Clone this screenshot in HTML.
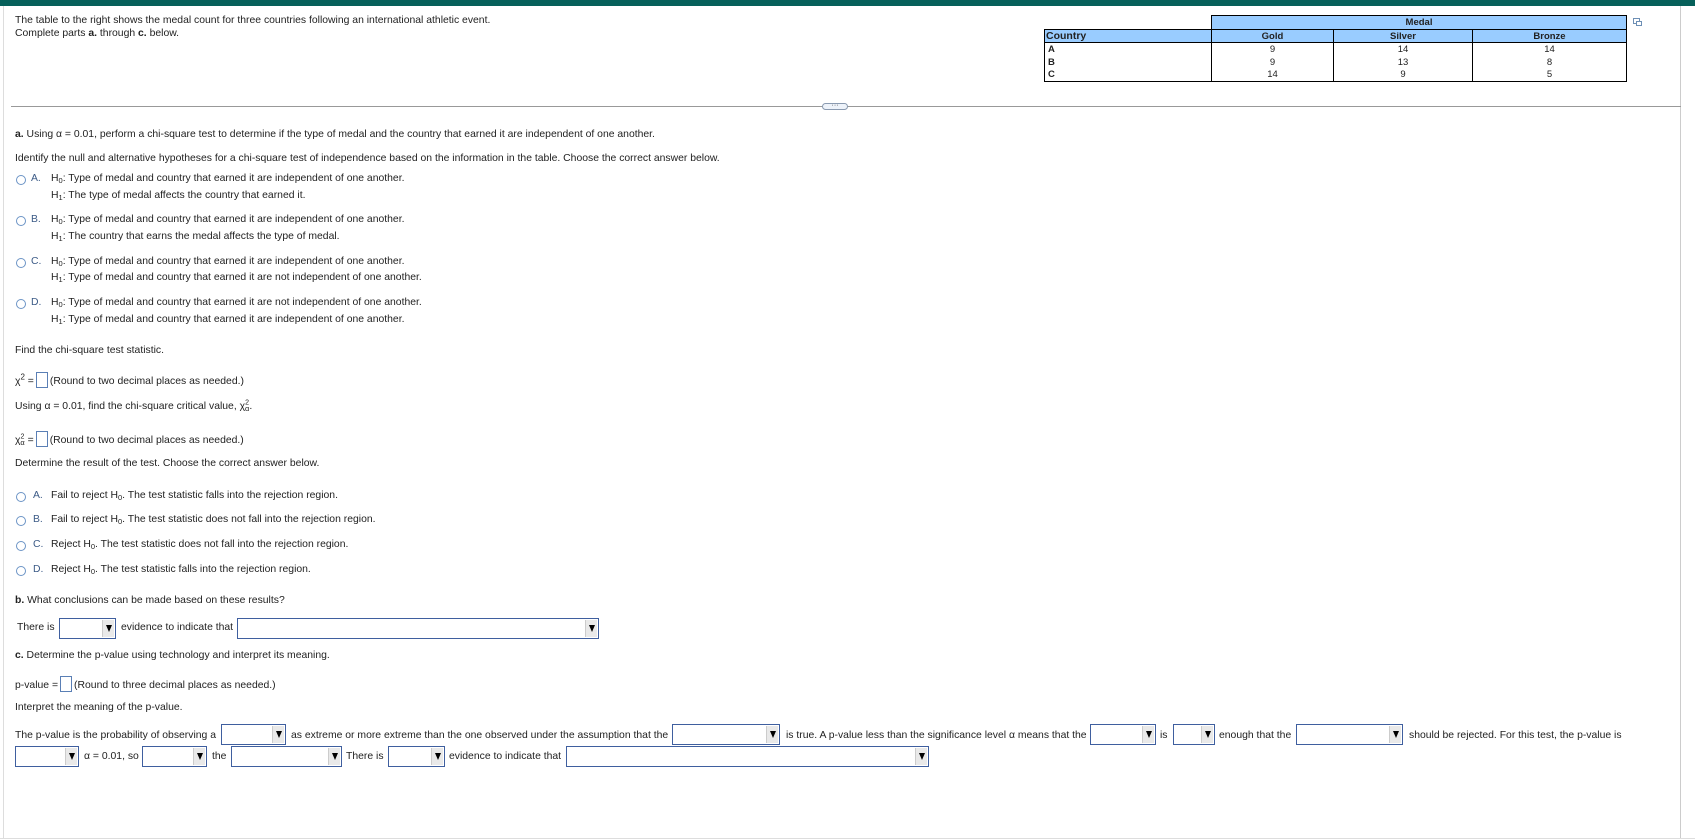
<!DOCTYPE html>
<html><head><meta charset="utf-8">
<style>
*{margin:0;padding:0;box-sizing:border-box}
html,body{width:1695px;height:840px;background:#fff;overflow:hidden}
body{font-family:"Liberation Sans",Arial,sans-serif;font-size:10.4px;color:#222;position:relative}
.t{position:absolute;white-space:nowrap;line-height:12px}
sub{font-size:7.5px;vertical-align:-2px;line-height:0}
.r{position:absolute;width:10px;height:10px;border:1px solid #6c94c6;border-radius:50%;background:#fff}
.L{color:#3b5a86}
.ib{display:inline-block;width:12px;height:16px;border:1px solid #5a7fb5;vertical-align:-4px;background:#fff;margin:0 2px;line-height:0}
.dd{position:absolute;border:1px solid #3f5f9f;background:#fff;height:21px}
.dd:after{content:"";position:absolute;right:1px;top:1px;width:11px;height:17px;background:#e9e9e9;border-left:1px solid #ccc}
.dd:before{content:"";position:absolute;right:3px;top:6px;border-left:3.5px solid transparent;border-right:3.5px solid transparent;border-top:7px solid #000;z-index:2}
table{position:absolute;border-collapse:collapse;font-size:9.5px}
td{border:1px solid #000;height:13px;line-height:11px;text-align:center}
</style></head><body>
<div style="position:absolute;left:0;top:0;width:1695px;height:6px;background:#06605a"></div>
<div style="position:absolute;left:3px;top:6px;width:1px;height:832px;background:#ddd"></div>
<div style="position:absolute;left:1680px;top:6px;width:1px;height:833px;background:#ccc"></div>
<div style="position:absolute;left:0;top:838px;width:1695px;height:1px;background:#ddd"></div>

<div class="t" style="left:15px;top:15px">The table to the right shows the medal count for three countries following an international athletic event.</div>
<div class="t" style="left:15px;top:28px">Complete parts <b>a.</b> through <b>c.</b> below.</div>

<div style="position:absolute;left:1211px;top:15px;width:416px;height:14px;background:#99ccff;border:1px solid #000;border-bottom:none;text-align:center;font-weight:bold;font-size:9.5px;line-height:13px">Medal</div>
<table style="left:1044px;top:29px;width:583px">
<tr style="background:#99ccff;font-weight:bold"><td style="width:167px;text-align:left;padding-left:1px;font-size:10.5px">Country</td><td style="width:122px">Gold</td><td style="width:139px">Silver</td><td>Bronze</td></tr>
<tr><td style="text-align:left;padding-left:3px;font-weight:bold;border-bottom:none">A</td><td style="border-bottom:none">9</td><td style="border-bottom:none">14</td><td style="border-bottom:none">14</td></tr>
<tr><td style="text-align:left;padding-left:3px;font-weight:bold;border-top:none;border-bottom:none">B</td><td style="border-top:none;border-bottom:none">9</td><td style="border-top:none;border-bottom:none">13</td><td style="border-top:none;border-bottom:none">8</td></tr>
<tr><td style="text-align:left;padding-left:3px;font-weight:bold;border-top:none">C</td><td style="border-top:none">14</td><td style="border-top:none">9</td><td style="border-top:none">5</td></tr>
</table>
<div style="position:absolute;left:1633px;top:18px;width:7px;height:6px;border:1px solid #6d8fb5"></div>
<div style="position:absolute;left:1636px;top:21px;width:6px;height:5px;border:1px solid #6d8fb5;background:#fff"></div>

<div style="position:absolute;left:11px;top:106px;width:1670px;height:1px;background:#999"></div>
<div style="position:absolute;left:822px;top:103px;width:26px;height:7px;border:1px solid #8a9ab0;border-radius:4px;background:#eef3fa;font-size:7px;line-height:3px;text-align:center;color:#333">···</div>

<div class="t" style="left:15px;top:129px"><b>a.</b> Using α = 0.01, perform a chi-square test to determine if the type of medal and the country that earned it are independent of one another.</div>
<div class="t" style="left:15px;top:153px">Identify the null and alternative hypotheses for a chi-square test of independence based on the information in the table. Choose the correct answer below.</div>

<div class="r" style="left:16px;top:175px"></div><div class="t L" style="left:31px;top:173px">A.</div>
<div class="t" style="left:51px;top:173px">H<sub>0</sub>: Type of medal and country that earned it are independent of one another.</div>
<div class="t" style="left:51px;top:190px">H<sub>1</sub>: The type of medal affects the country that earned it.</div>

<div class="r" style="left:16px;top:216px"></div><div class="t L" style="left:31px;top:214px">B.</div>
<div class="t" style="left:51px;top:214px">H<sub>0</sub>: Type of medal and country that earned it are independent of one another.</div>
<div class="t" style="left:51px;top:231px">H<sub>1</sub>: The country that earns the medal affects the type of medal.</div>

<div class="r" style="left:16px;top:258px"></div><div class="t L" style="left:31px;top:256px">C.</div>
<div class="t" style="left:51px;top:256px">H<sub>0</sub>: Type of medal and country that earned it are independent of one another.</div>
<div class="t" style="left:51px;top:272px">H<sub>1</sub>: Type of medal and country that earned it are not independent of one another.</div>

<div class="r" style="left:16px;top:299px"></div><div class="t L" style="left:31px;top:297px">D.</div>
<div class="t" style="left:51px;top:297px">H<sub>0</sub>: Type of medal and country that earned it are not independent of one another.</div>
<div class="t" style="left:51px;top:314px">H<sub>1</sub>: Type of medal and country that earned it are independent of one another.</div>

<div class="t" style="left:15px;top:345px">Find the chi-square test statistic.</div>
<div class="t" style="left:15px;top:372px">χ<sup style="font-size:8px;line-height:0">2</sup> =<span class="ib"></span>(Round to two decimal places as needed.)</div>
<div class="t" style="left:15px;top:401px">Using α = 0.01, find the chi-square critical value, χ<sup style="font-size:7px;line-height:0">2</sup><sub style="margin-left:-4px">α</sub>.</div>
<div class="t" style="left:15px;top:431px">χ<sup style="font-size:7px;line-height:0">2</sup><sub style="margin-left:-4px">α</sub> =<span class="ib"></span>(Round to two decimal places as needed.)</div>
<div class="t" style="left:15px;top:458px">Determine the result of the test. Choose the correct answer below.</div>

<div class="r" style="left:16px;top:492px"></div><div class="t L" style="left:33px;top:490px">A.</div><div class="t" style="left:51px;top:490px">Fail to reject H<sub>0</sub>. The test statistic falls into the rejection region.</div>
<div class="r" style="left:16px;top:516px"></div><div class="t L" style="left:33px;top:514px">B.</div><div class="t" style="left:51px;top:514px">Fail to reject H<sub>0</sub>. The test statistic does not fall into the rejection region.</div>
<div class="r" style="left:16px;top:541px"></div><div class="t L" style="left:33px;top:539px">C.</div><div class="t" style="left:51px;top:539px">Reject H<sub>0</sub>. The test statistic does not fall into the rejection region.</div>
<div class="r" style="left:16px;top:566px"></div><div class="t L" style="left:33px;top:564px">D.</div><div class="t" style="left:51px;top:564px">Reject H<sub>0</sub>. The test statistic falls into the rejection region.</div>

<div class="t" style="left:15px;top:595px"><b>b.</b> What conclusions can be made based on these results?</div>
<div class="t" style="left:17px;top:622px">There is</div>
<div class="dd" style="left:59px;top:618px;width:57px"></div>
<div class="t" style="left:121px;top:622px">evidence to indicate that</div>
<div class="dd" style="left:237px;top:618px;width:362px"></div>

<div class="t" style="left:15px;top:650px"><b>c.</b> Determine the p-value using technology and interpret its meaning.</div>
<div class="t" style="left:15px;top:676px">p-value =<span class="ib"></span>(Round to three decimal places as needed.)</div>
<div class="t" style="left:15px;top:702px">Interpret the meaning of the p-value.</div>

<div class="t" style="left:15px;top:730px">The p-value is the probability of observing a</div>
<div class="dd" style="left:221px;top:724px;width:65px"></div>
<div class="t" style="left:291px;top:730px">as extreme or more extreme than the one observed under the assumption that the</div>
<div class="dd" style="left:672px;top:724px;width:108px"></div>
<div class="t" style="left:786px;top:730px">is true. A p-value less than the significance level α means that the</div>
<div class="dd" style="left:1090px;top:724px;width:66px"></div>
<div class="t" style="left:1160px;top:730px">is</div>
<div class="dd" style="left:1173px;top:724px;width:42px"></div>
<div class="t" style="left:1219px;top:730px">enough that the</div>
<div class="dd" style="left:1296px;top:724px;width:107px"></div>
<div class="t" style="left:1409px;top:730px">should be rejected. For this test, the p-value is</div>

<div class="dd" style="left:15px;top:746px;width:64px"></div>
<div class="t" style="left:84px;top:751px">α = 0.01, so</div>
<div class="dd" style="left:142px;top:746px;width:65px"></div>
<div class="t" style="left:212px;top:751px">the</div>
<div class="dd" style="left:231px;top:746px;width:111px"></div>
<div class="t" style="left:346px;top:751px">There is</div>
<div class="dd" style="left:388px;top:746px;width:57px"></div>
<div class="t" style="left:449px;top:751px">evidence to indicate that</div>
<div class="dd" style="left:566px;top:746px;width:363px"></div>
</body></html>
